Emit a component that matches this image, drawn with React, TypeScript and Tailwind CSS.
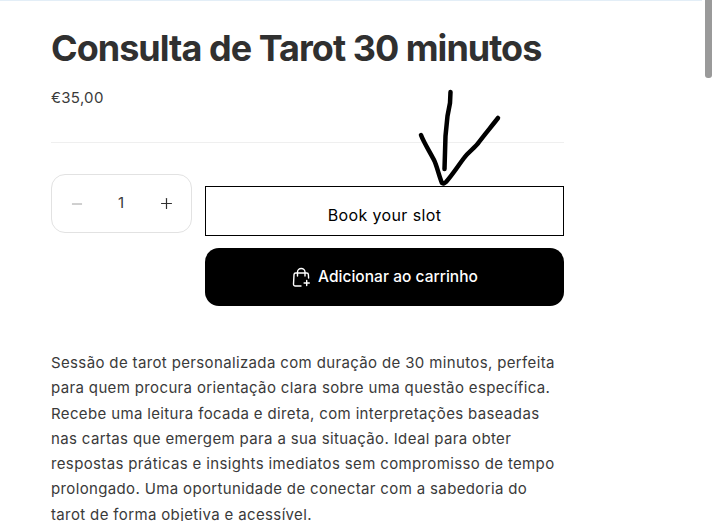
import { Minus, Plus } from "lucide-react";

function BagPlus() {
  return (
    <svg width="20" height="20" viewBox="0 0 20 20" fill="none" stroke="currentColor" strokeWidth="1.4" strokeLinecap="round" strokeLinejoin="round">
      <path d="M10 19H4.300a1.800 1.800 0 0 1-1.800-1.900l.5-9.500a1.700 1.700 0 0 1 1.700-1.600h11a1.700 1.700 0 0 1 1.700 1.600l.2 3.400" />
      <path d="M6.500 9V5a3.700 3.500 0 0 1 7.500 0v4" />
      <path d="M15.700 13.400v5.200M13.100 16h5.200" />
    </svg>
  );
}

function Arrow() {
  return (
    <svg className="absolute left-[415px] top-[86px]" width="90" height="104" viewBox="0 0 90 104" fill="none" stroke="#000" strokeWidth="4.5" strokeLinecap="round" strokeLinejoin="round">
      <path d="M35.500 6 L35 17 L32.500 30 L30.500 50 L29.500 83" />
      <path d="M6 49 C9 57 15 66 19 74 C22 80 24 90 27 97 C28 98 30 97 31 96 C38 88 43 80 49 72 C54 65 60 62 64 56 C70 48 76 41 83 32" />
    </svg>
  );
}

export default function App() {
  return (
    <div className="relative h-[521px] w-[715px] overflow-hidden bg-white font-['Inter',sans-serif] text-[#3a3a3a]">
      <div className="h-px w-[702px] bg-[#e3eef7]" />
      <main className="w-[564px] pl-[51px]">
        <h1 className="mt-[27px] text-[36px] leading-[40px] font-bold tracking-[-0.98px] whitespace-nowrap text-[#303030]">Consulta de Tarot 30 minutos</h1>
        <p className="mt-[19px] text-[15px] leading-[22px] tracking-[0.3px]">€35,00</p>
        <hr className="mt-[33px] border-t border-[#efefef]" />
        <div className="mt-[31px] flex gap-[13px]">
          <div className="flex h-[59px] w-[141px] shrink-0 items-center justify-between rounded-[14px] border border-[#e2e2e2] pr-[16px] pl-[17px]">
            <Minus size={16} strokeWidth={1.5} className="text-[#a0a0a0]" />
            <span className="-ml-px text-[15px]">1</span>
            <Plus size={17} strokeWidth={1.7} className="text-[#303030]" />
          </div>
          <div className="mt-[12px] flex-1">
            <button className="flex h-[50px] w-full items-end justify-center border border-black pb-[8px] text-[16px] leading-[24px] tracking-[0.38px] text-black">Book your slot</button>
            <button className="mt-[12px] flex h-[58px] w-full items-center justify-center gap-[7px] rounded-[14px] bg-black text-[15.5px] font-medium tracking-[0.03px] text-white">
              <BagPlus />
              Adicionar ao carrinho
            </button>
          </div>
        </div>
        <p className="mt-[44px] text-[15px] leading-[25.3px] tracking-[0.36px]">
          Sessão de tarot personalizada com duração de 30 minutos, perfeita para quem procura orientação clara sobre uma questão específica. Recebe uma leitura focada e direta, com interpretações baseadas nas cartas que emergem para a sua situação. Ideal para obter respostas práticas e insights imediatos sem compromisso de tempo prolongado. Uma oportunidade de conectar com a sabedoria do tarot de forma objetiva e acessível.
        </p>
      </main>
      <Arrow />
      <div className="absolute top-0 left-[705px] h-[78px] w-[7px] rounded-b-[3px] bg-[#9a9a9a]" />
    </div>
  );
}
